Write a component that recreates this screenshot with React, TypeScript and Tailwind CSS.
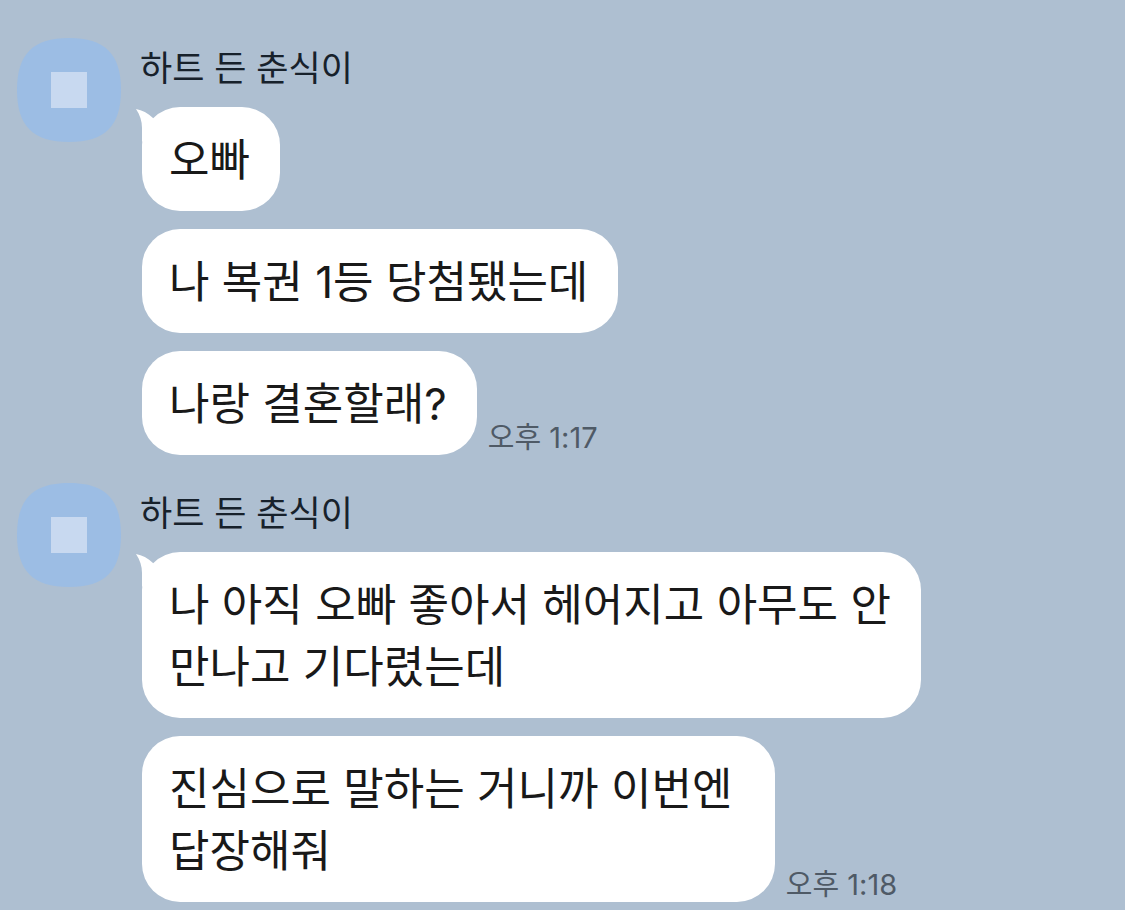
interface Message {
  text: string;
  time?: string;
}

interface MessageGroupData {
  sender: string;
  messages: Message[];
}

const groups: MessageGroupData[] = [
  {
    sender: "하트 든 춘식이",
    messages: [
      { text: "오빠" },
      { text: "나 복권 1등 당첨됐는데" },
      { text: "나랑 결혼할래?", time: "오후 1:17" },
    ],
  },
  {
    sender: "하트 든 춘식이",
    messages: [
      { text: "나 아직 오빠 좋아서 헤어지고 아무도 안\n만나고 기다렸는데" },
      { text: "진심으로 말하는 거니까 이번엔 \n답장해줘", time: "오후 1:18" },
    ],
  },
];

function Avatar() {
  return (
    <svg className="size-[104px] shrink-0" viewBox="0 0 104 104" aria-hidden="true">
      <path
        d="M52 0C88 0 104 16 104 52S88 104 52 104S0 88 0 52S16 0 52 0Z"
        fill="#9cbde4"
      />
      <rect x="34" y="34" width="36" height="36" fill="#c8d9f0" />
    </svg>
  );
}

function BubbleTail() {
  return (
    <svg
      className="absolute -left-[6px] top-[2px] h-[36px] w-[26px]"
      viewBox="0 0 26 36"
      aria-hidden="true"
    >
      <path d="M0 0C6 1 12 4 17 9L26 20L10 36L6 32V19C6 12 4 6 0 0Z" fill="#fff" />
    </svg>
  );
}

function Bubble({ message, hasTail }: { message: Message; hasTail: boolean }) {
  return (
    <div className="flex items-end gap-[11px]">
      <p className="relative whitespace-pre rounded-[38px] bg-white pt-[22px] pb-[20px] pl-[27px] pr-[30px] text-[44px] leading-[62px] text-[#191919]">
        {hasTail && <BubbleTail />}
        {message.text}
      </p>
      {message.time && (
        <time className="whitespace-nowrap text-[29px] leading-[34px] text-[#4f5a66]">
          {message.time}
        </time>
      )}
    </div>
  );
}

function MessageGroup({ group }: { group: MessageGroupData }) {
  return (
    <section className="flex items-start gap-[19px]">
      <Avatar />
      <div className="min-w-0 flex-1">
        <h2 className="mb-[9px] text-[35px] leading-[60px] text-[#17212b]">
          {group.sender}
        </h2>
        <div className="flex flex-col gap-[18px] pl-[2px]">
          {group.messages.map((message, i) => (
            <Bubble key={message.text} message={message} hasTail={i === 0} />
          ))}
        </div>
      </div>
    </section>
  );
}

export default function App() {
  return (
    <main className="flex min-h-screen flex-col gap-[28px] bg-[#aebfd1] pl-[17px] pt-[38px] pb-[8px] font-['Inter','Noto_Sans_CJK_KR',sans-serif]">
      {groups.map((group, i) => (
        <MessageGroup key={i} group={group} />
      ))}
    </main>
  );
}
